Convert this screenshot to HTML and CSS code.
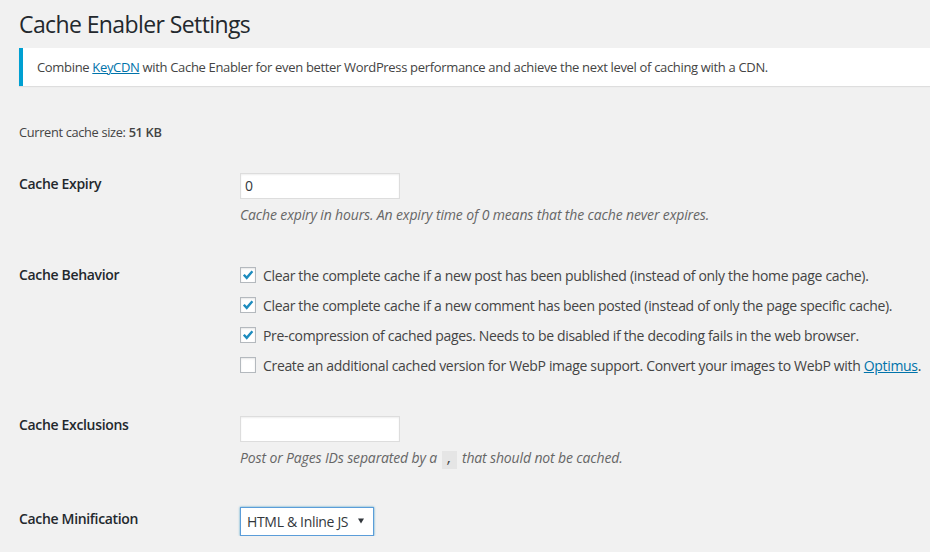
FILE: index.html
```html
<!DOCTYPE html>
<html>
<head>
<meta charset="utf-8">
<link rel="stylesheet" href="styles.css">
</head>
<body>
<div class="wrap">
  <h1 class="title">Cache Enabler Settings</h1>
  <div class="notice">
    <p>Combine <a href="#">KeyCDN</a> with Cache Enabler for even better WordPress performance and achieve the next level of caching with a CDN.</p>
  </div>
  <p class="size">Current cache size: <b>51 KB</b></p>
  <div class="form">
    <div class="row row-expiry">
      <div class="th">Cache Expiry</div>
      <div class="td">
        <div class="input">0</div>
        <p class="desc">Cache expiry in hours. An expiry time of 0 means that the cache never expires.</p>
      </div>
    </div>
    <div class="row row-behavior">
      <div class="th">Cache Behavior</div>
      <div class="td checks">
        <label class="check"><span class="box on"><svg viewBox="0 0 16 16" width="16" height="16"><path d="M3.8 7.8 L6.7 10.9 L12.4 4.3" fill="none" stroke="#1e8cbe" stroke-width="2.4"/></svg></span><span>Clear the complete cache if a new post has been published (instead of only the home page cache).</span></label>
        <label class="check"><span class="box on"><svg viewBox="0 0 16 16" width="16" height="16"><path d="M3.8 7.8 L6.7 10.9 L12.4 4.3" fill="none" stroke="#1e8cbe" stroke-width="2.4"/></svg></span><span>Clear the complete cache if a new comment has been posted (instead of only the page specific cache).</span></label>
        <label class="check"><span class="box on"><svg viewBox="0 0 16 16" width="16" height="16"><path d="M3.8 7.8 L6.7 10.9 L12.4 4.3" fill="none" stroke="#1e8cbe" stroke-width="2.4"/></svg></span><span>Pre-compression of cached pages. Needs to be disabled if the decoding fails in the web browser.</span></label>
        <label class="check"><span class="box"></span><span>Create an additional cached version for WebP image support. Convert your images to WebP with <a href="#">Optimus</a>.</span></label>
      </div>
    </div>
    <div class="row row-excl">
      <div class="th">Cache Exclusions</div>
      <div class="td">
        <div class="input"></div>
        <p class="desc">Post or Pages IDs separated by a <code>,</code> that should not be cached.</p>
      </div>
    </div>
    <div class="row row-min">
      <div class="th">Cache Minification</div>
      <div class="td">
        <div class="select"><span>HTML &amp; Inline JS</span><svg class="arrow" viewBox="0 0 6 6" width="6" height="6"><path d="M0 0.5 H6 L3 5.5 Z" fill="#32373c"/></svg></div>
      </div>
    </div>
  </div>
</div>
</body>
</html>
```
FILE: styles.css
```css
html, body {
  margin: 0;
  padding: 0;
  background: #f1f1f1;
}
body {
  font-family: "Open Sans", "Noto Sans", sans-serif;
  font-size: 13px;
  color: #444;
  letter-spacing: -0.33px;
  overflow: hidden;
}
.wrap {
  padding: 0 0 0 19px;
}
.title {
  margin: 0;
  padding: 8px 0 0;
  font-size: 23px;
  font-weight: 400;
  line-height: 33px;
  color: #23282d;
  letter-spacing: -0.6px;
}
.notice {
  margin: 7px 0 0;
  background: #fff;
  border-left: 4px solid #00a0d2;
  box-shadow: 0 1px 1px rgba(0,0,0,0.08);
  height: 38px;
  display: flex;
  align-items: center;
  padding-left: 14px;
}
.notice p {
  margin: 0;
  white-space: nowrap;
}
a {
  color: #0073aa;
}
.size {
  margin: 36px 0 0;
  line-height: 20px;
  font-size: 12.8px;
}
.size b {
  font-weight: 600;
}
.form {
  display: flex;
  flex-direction: column;
  font-size: 14px;
}
.row {
  display: flex;
}
.th {
  width: 221px;
  flex: none;
  font-weight: 600;
  color: #23282d;
  line-height: 20px;
}
.td {
  flex: 1;
}
.row-expiry { margin-top: 31px; }
.row-expiry .th { padding-top: 1px; }
.row-behavior { margin-top: 40px; }
.row-behavior .th { padding-top: 0; }
.row-excl { margin-top: 40px; }
.row-excl .th { padding-top: 0; }
.row-min { margin-top: 37px; }
.row-min .th { padding-top: 2px; }
.input {
  box-sizing: border-box;
  width: 160px;
  height: 26px;
  background: #fff;
  border: 1px solid #ddd;
  box-shadow: inset 0 1px 2px rgba(0,0,0,0.07);
  padding: 0 4px;
  line-height: 24px;
  color: #32373c;
}
.row-excl .input { margin-top: 1px; }
.desc {
  margin: 6px 0 0;
  font-style: italic;
  color: #666;
  line-height: 20px;
  white-space: nowrap;
  letter-spacing: -0.14px;
}
code {
  font-family: "Liberation Mono", monospace;
  font-style: normal;
  background: #e5e5e5;
  color: #444;
  padding: 1px 4px 2px;
  margin: 0 1px;
  font-size: 13px;
  letter-spacing: 0;
}
.checks {
  display: flex;
  flex-direction: column;
  gap: 10px;
}
.check {
  display: flex;
  align-items: center;
  height: 20px;
  white-space: nowrap;
}
.box {
  box-sizing: border-box;
  width: 16px;
  height: 16px;
  flex: none;
  border: 1px solid #b4b9be;
  background: #fff;
  box-shadow: inset 0 1px 2px rgba(0,0,0,0.1);
  margin-right: 7px;
  position: relative;
}
.box svg {
  position: absolute;
  left: -1px;
  top: -1px;
}
.select {
  box-sizing: border-box;
  width: 134px;
  height: 29px;
  background: #fff;
  border: 1px solid #5b9dd9;
  box-shadow: 0 0 2px rgba(30,140,190,0.8);
  padding: 0 0 0 6px;
  display: flex;
  align-items: center;
  color: #32373c;
  white-space: nowrap;
}
.arrow {
  margin-left: 10px;
  margin-top: -1px;
}
```
